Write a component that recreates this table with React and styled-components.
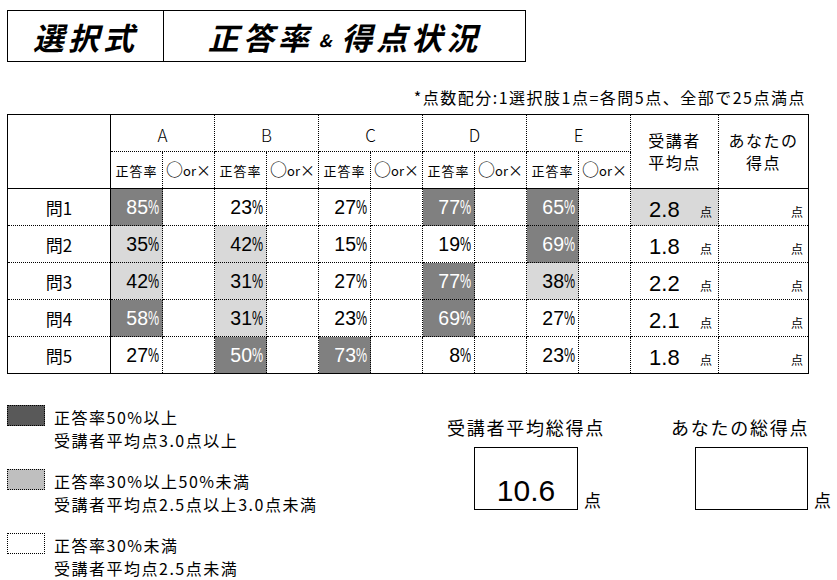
import React from 'react';
import styled, { createGlobalStyle } from 'styled-components';

const GlobalStyle = createGlobalStyle`
  html, body { margin: 0; padding: 0; background: #fff; }
  body {
    font-family: "Noto Sans CJK JP", "Noto Sans", sans-serif;
    color: #000;
  }
`;

const shade = {
  dark: '#808080',
  light: '#d9d9d9',
  none: '#fff',
};

const groups = ['A', 'B', 'C', 'D', 'E'];

const rows = [
  { label: '問1', rates: [['85', 'dark'], ['23'], ['27'], ['77', 'dark'], ['65', 'dark']], avg: '2.8', avgLevel: 'light' },
  { label: '問2', rates: [['35', 'light'], ['42', 'light'], ['15'], ['19'], ['69', 'dark']], avg: '1.8' },
  { label: '問3', rates: [['42', 'light'], ['31', 'light'], ['27'], ['77', 'dark'], ['38', 'light']], avg: '2.2' },
  { label: '問4', rates: [['58', 'dark'], ['31', 'light'], ['23'], ['69', 'dark'], ['27']], avg: '2.1' },
  { label: '問5', rates: [['27'], ['50', 'dark'], ['73', 'dark'], ['8'], ['23']], avg: '1.8' },
];

const legend = [
  { color: '#595959', lines: ['正答率50%以上', '受講者平均点3.0点以上'] },
  { color: '#bfbfbf', lines: ['正答率30%以上50%未満', '受講者平均点2.5点以上3.0点未満'] },
  { color: '#fff', lines: ['正答率30%未満', '受講者平均点2.5点未満'] },
];

const Page = styled.div`
  width: 837px;
  height: 580px;
  padding: 10px 0 0 7px;
  box-sizing: border-box;
  overflow: hidden;
`;

const TitleBox = styled.div`
  display: flex;
  width: 519px;
  height: 52px;
  border: 1px solid #000;
  box-sizing: border-box;
`;

const TitleCell = styled.div`
  flex: ${p => (p.$w ? `0 0 ${p.$w}px` : '1')};
  display: flex;
  align-items: center;
  justify-content: center;
  font-size: 31px;
  font-weight: 700;
  font-style: italic;
  letter-spacing: 4px;
  border-right: ${p => (p.$divider ? '1px solid #000' : 'none')};
`;

const Amp = styled.span`
  font-size: 17px;
  letter-spacing: 0;
  margin: 6px 10px 0 6px;
`;

const Note = styled.div`
  width: 799px;
  height: 20px;
  margin-top: 25px;
  text-align: right;
  font-size: 16px;
  line-height: 20px;
  letter-spacing: 1.5px;
`;

const Sheet = styled.table`
  margin-top: 7px;
  width: 801px;
  border-collapse: collapse;
  table-layout: fixed;
  border: 1px solid #000;
`;

const Row = styled.tr`
  height: 37px;
`;

const Cell = styled.td`
  padding: 0;
  font-weight: 400;
  border-right: 1px ${p => (p.$solidRight ? 'solid' : 'dotted')} #000;
  border-bottom: 1px ${p => (p.$solidBottom ? 'solid' : 'dotted')} #000;
`;

const GroupHead = styled(Cell)`
  text-align: center;
  font-size: 17px;
  font-weight: 300;
  padding-top: 3px;
`;

const SubHead = styled(Cell)`
  text-align: center;
  font-size: 13px;
  letter-spacing: ${p => (p.$tight ? '0' : '1px')};
  white-space: nowrap;
`;

const Glyph = styled.span`
  font-size: ${p => p.$size}px;
  line-height: 1;
`;

const StackHead = styled(Cell)`
  text-align: center;
  font-size: 16px;
  line-height: 22px;
  letter-spacing: 1.5px;
  padding-bottom: 2px;
`;

const RowLabel = styled(Cell)`
  text-align: center;
  font-size: 17px;
`;

const RateCell = styled(Cell)`
  background: ${p => shade[p.$level || 'none']};
  color: ${p => (p.$level === 'dark' ? '#fff' : '#000')};
  text-align: right;
  padding-right: 3px;
  font-family: "Liberation Sans", Arial, sans-serif;
  font-size: 19.5px;
`;

const Percent = styled.span`
  display: inline-block;
  width: 11px;
  transform: scaleX(0.64);
  transform-origin: left center;
`;

const MarkCell = styled(Cell)``;

const AvgCell = styled(Cell)`
  background: ${p => shade[p.$level || 'none']};
  vertical-align: bottom;
`;

const AvgInner = styled.div`
  display: flex;
  align-items: baseline;
  justify-content: space-between;
  padding: 0 6px 0 18px;
  line-height: 26px;
`;

const AvgNum = styled.span`
  font-family: "Liberation Sans", Arial, sans-serif;
  font-size: 22px;
`;

const Unit = styled.span`
  font-size: ${p => p.$size || 12}px;
`;

const ScoreCell = styled(Cell)`
  vertical-align: bottom;
  text-align: right;
  padding-right: 5px;
  line-height: 26px;
`;

const Bottom = styled.div`
  display: flex;
  align-items: flex-start;
  margin-top: 31px;
`;

const Legend = styled.div`
  width: 440px;
  flex: none;
`;

const LegendItem = styled.div`
  display: flex;
  align-items: flex-start;
  & + & {
    margin-top: 17px;
  }
`;

const Swatch = styled.div`
  width: 38px;
  height: 21px;
  box-sizing: border-box;
  border: 1px dotted #000;
  background: ${p => p.$color};
  margin-right: 9px;
  flex: none;
`;

const LegendText = styled.div`
  font-size: 16px;
  line-height: 23px;
  letter-spacing: 1.5px;
  margin-top: 1px;
`;

const TotalGroup = styled.div`
  width: ${p => p.$w}px;
  flex: none;
  padding-top: 11px;
`;

const TotalLabel = styled.div`
  font-size: 18px;
  line-height: 22px;
  letter-spacing: 1.75px;
  white-space: nowrap;
`;

const TotalRow = styled.div`
  display: flex;
  align-items: flex-end;
  margin: 9px 0 0 ${p => p.$offset}px;
`;

const TotalBox = styled.div`
  width: ${p => p.$w}px;
  height: 63px;
  box-sizing: border-box;
  border: 1px solid #000;
  display: flex;
  align-items: flex-end;
  justify-content: center;
  font-family: "Liberation Sans", Arial, sans-serif;
  font-size: 30px;
  line-height: 34px;
  padding-bottom: 1px;
`;

const TotalUnit = styled.span`
  font-size: 17px;
  line-height: 20px;
  margin-left: 6px;
`;

function RateValue({ value }) {
  return (
    <>
      {value}
      <Percent>%</Percent>
    </>
  );
}

export default function App() {
  return (
    <Page>
      <GlobalStyle />
      <TitleBox>
        <TitleCell $w={155} $divider>選択式</TitleCell>
        <TitleCell>
          正答率<Amp>&amp;</Amp>得点状況
        </TitleCell>
      </TitleBox>

      <Note>*点数配分:1選択肢1点=各問5点、全部で25点満点</Note>

      <Sheet>
        <colgroup>
          <col style={{ width: 103 }} />
          {Array.from({ length: 10 }, (_, i) => (
            <col key={i} style={{ width: 52 }} />
          ))}
          <col style={{ width: 88 }} />
          <col style={{ width: 90 }} />
        </colgroup>
        <tbody>
          <Row>
            <Cell as="th" rowSpan={2} $solidRight $solidBottom />
            {groups.map(g => (
              <GroupHead as="th" key={g} colSpan={2}>{g}</GroupHead>
            ))}
            <StackHead as="th" rowSpan={2} $solidBottom>受講者<br />平均点</StackHead>
            <StackHead as="th" rowSpan={2} $solidBottom>あなたの<br />得点</StackHead>
          </Row>
          <Row>
            {groups.map(g => (
              <React.Fragment key={g}>
                <SubHead as="th" $solidBottom>正答率</SubHead>
                <SubHead as="th" $solidBottom $tight>
                  <Glyph $size={17}>○</Glyph>or<Glyph $size={15}>×</Glyph>
                </SubHead>
              </React.Fragment>
            ))}
          </Row>
          {rows.map(r => (
            <Row key={r.label}>
              <RowLabel $solidRight>{r.label}</RowLabel>
              {r.rates.map(([v, level], i) => (
                <React.Fragment key={i}>
                  <RateCell $level={level}><RateValue value={v} /></RateCell>
                  <MarkCell />
                </React.Fragment>
              ))}
              <AvgCell $level={r.avgLevel}>
                <AvgInner>
                  <AvgNum>{r.avg}</AvgNum>
                  <Unit>点</Unit>
                </AvgInner>
              </AvgCell>
              <ScoreCell><Unit>点</Unit></ScoreCell>
            </Row>
          ))}
        </tbody>
      </Sheet>

      <Bottom>
        <Legend>
          {legend.map(item => (
            <LegendItem key={item.lines[0]}>
              <Swatch $color={item.color} />
              <LegendText>
                {item.lines.map(l => (
                  <div key={l}>{l}</div>
                ))}
              </LegendText>
            </LegendItem>
          ))}
        </Legend>

        <TotalGroup $w={224}>
          <TotalLabel>受講者平均総得点</TotalLabel>
          <TotalRow $offset={27}>
            <TotalBox $w={104}>10.6</TotalBox>
            <TotalUnit>点</TotalUnit>
          </TotalRow>
        </TotalGroup>

        <TotalGroup $w={166}>
          <TotalLabel>あなたの総得点</TotalLabel>
          <TotalRow $offset={24}>
            <TotalBox $w={113} />
            <TotalUnit>点</TotalUnit>
          </TotalRow>
        </TotalGroup>
      </Bottom>
    </Page>
  );
}
